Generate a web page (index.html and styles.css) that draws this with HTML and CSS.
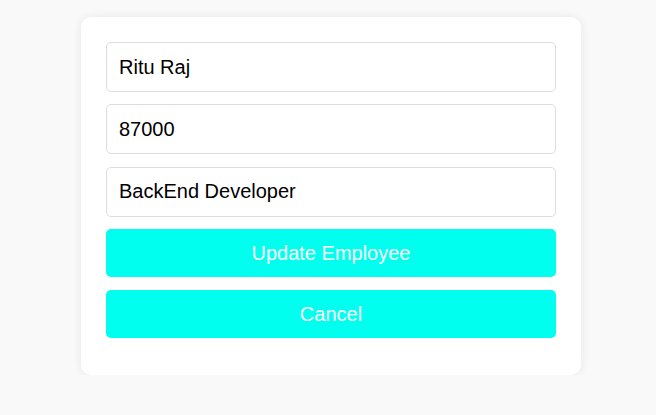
FILE: index.html
```html
<!DOCTYPE html>
<html>
<head>
<meta charset="utf-8">
<link rel="stylesheet" href="styles.css">
</head>
<body>
<div class="page">
  <form class="card">
    <input class="field" type="text" value="Ritu Raj">
    <input class="field" type="text" value="87000">
    <input class="field" type="text" value="BackEnd Developer">
    <button type="button" class="btn">Update Employee</button>
    <button type="button" class="btn">Cancel</button>
  </form>
</div>
</body>
</html>
```
FILE: styles.css
```css
html, body {
  margin: 0;
  padding: 0;
  background: #f9f9f9;
  font-family: "Liberation Sans", Arial, sans-serif;
}
.page {
  display: flex;
  justify-content: center;
  padding: 17px 0 0 6px;
}
.card {
  width: 500px;
  box-sizing: border-box;
  background: #ffffff;
  border-radius: 10px;
  box-shadow: 0 0 10px rgba(0, 0, 0, 0.08);
  padding: 25px 25px 37px;
  display: flex;
  flex-direction: column;
}
.field {
  box-sizing: border-box;
  height: 50px;
  margin-bottom: 12.4px;
  padding: 0 12px;
  border: 1px solid #dddddd;
  border-radius: 5px;
  font-family: inherit;
  font-size: 20px;
  color: #000;
  background: #fff;
  outline: none;
}
.btn {
  height: 48px;
  border: none;
  border-radius: 5px;
  background: #00ffee;
  color: #ffffff;
  font-family: inherit;
  font-size: 20px;
  margin-bottom: 13px;
  padding: 0;
}
.btn:last-child {
  margin-bottom: 0;
}
```
